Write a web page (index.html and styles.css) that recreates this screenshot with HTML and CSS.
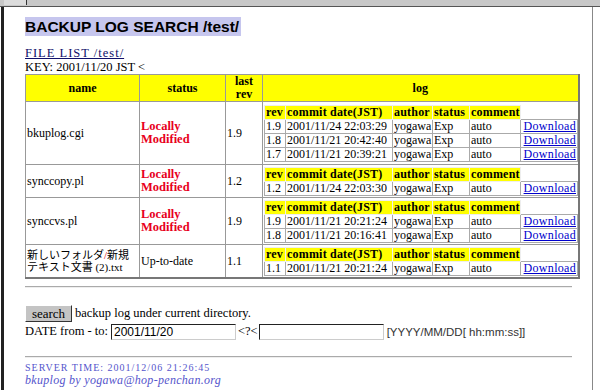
FILE: index.html
```html
<!DOCTYPE html>
<html lang="ja">

<head>
  <meta charset="utf-8">
  <title>BACKUP LOG SEARCH</title>
  <link rel="stylesheet" href="styles.css">
</head>

<body>
  <div class="titlebar"><span class="tab">Bkmrk</span></div>
  <div class="page">

    <h1 class="title"><span>BACKUP LOG SEARCH /test/</span></h1>

    <a href="#" class="filelist">FILE LIST /test/</a>
    <div class="key">KEY: 2001/11/20 JST &lt;</div>

    <table class="files">
      <colgroup>
        <col class="c-name">
        <col class="c-status">
        <col class="c-rev">
        <col class="c-log">
      </colgroup>
      <tr>
        <th>name</th>
        <th>status</th>
        <th>last<br>rev</th>
        <th>log</th>
      </tr>
      <tr class="tall">
        <td>bkuplog.cgi</td>
        <td class="mod">Locally<br>Modified</td>
        <td>1.9</td>
        <td class="logcell">
          <table class="log">
            <colgroup><col class="l-rev"><col class="l-date"><col class="l-author"><col class="l-status"><col class="l-comment"><col></colgroup>
            <tr><th>rev</th><th>commit date(JST)</th><th>author</th><th>status</th><th>comment</th><td class="blank"></td></tr>
            <tr><td>1.9</td><td>2001/11/24 22:03:29</td><td>yogawa</td><td>Exp</td><td>auto</td><td class="dl"><a href="#">Download</a></td></tr>
            <tr><td>1.8</td><td>2001/11/21 20:42:40</td><td>yogawa</td><td>Exp</td><td>auto</td><td class="dl"><a href="#">Download</a></td></tr>
            <tr><td>1.7</td><td>2001/11/21 20:39:21</td><td>yogawa</td><td>Exp</td><td>auto</td><td class="dl"><a href="#">Download</a></td></tr>
          </table>
        </td>
      </tr>
      <tr>
        <td>synccopy.pl</td>
        <td class="mod">Locally<br>Modified</td>
        <td>1.2</td>
        <td class="logcell">
          <table class="log">
            <colgroup><col class="l-rev"><col class="l-date"><col class="l-author"><col class="l-status"><col class="l-comment"><col></colgroup>
            <tr><th>rev</th><th>commit date(JST)</th><th>author</th><th>status</th><th>comment</th><td class="blank"></td></tr>
            <tr><td>1.2</td><td>2001/11/24 22:03:30</td><td>yogawa</td><td>Exp</td><td>auto</td><td class="dl"><a href="#">Download</a></td></tr>
          </table>
        </td>
      </tr>
      <tr>
        <td>synccvs.pl</td>
        <td class="mod">Locally<br>Modified</td>
        <td>1.9</td>
        <td class="logcell">
          <table class="log">
            <colgroup><col class="l-rev"><col class="l-date"><col class="l-author"><col class="l-status"><col class="l-comment"><col></colgroup>
            <tr><th>rev</th><th>commit date(JST)</th><th>author</th><th>status</th><th>comment</th><td class="blank"></td></tr>
            <tr><td>1.9</td><td>2001/11/21 20:21:24</td><td>yogawa</td><td>Exp</td><td>auto</td><td class="dl"><a href="#">Download</a></td></tr>
            <tr><td>1.8</td><td>2001/11/21 20:16:41</td><td>yogawa</td><td>Exp</td><td>auto</td><td class="dl"><a href="#">Download</a></td></tr>
          </table>
        </td>
      </tr>
      <tr>
        <td class="jp">新しいフォルダ<span class="slash">/</span>新規<br>テキスト文書 (2).txt</td>
        <td>Up-to-date</td>
        <td>1.1</td>
        <td class="logcell">
          <table class="log">
            <colgroup><col class="l-rev"><col class="l-date"><col class="l-author"><col class="l-status"><col class="l-comment"><col></colgroup>
            <tr><th>rev</th><th>commit date(JST)</th><th>author</th><th>status</th><th>comment</th><td class="blank"></td></tr>
            <tr><td>1.1</td><td>2001/11/21 20:21:24</td><td>yogawa</td><td>Exp</td><td>auto</td><td class="dl"><a href="#">Download</a></td></tr>
          </table>
        </td>
      </tr>
    </table>

    <hr class="rule">

    <form class="search">
      <div class="line">
        <button type="button" class="btn">search</button>
        <span>backup log under current directory.</span>
      </div>
      <div class="line">
        <span>DATE from - to:</span>
        <input type="text" class="date" value="2001/11/20">
        <span class="sep">&lt;?&lt;</span>
        <input type="text" class="date">
        <span class="fmt">[YYYY/MM/DD[ hh:mm:ss]]</span>
      </div>
    </form>

    <hr class="rule second">

    <div class="footer">
      <div class="time">SERVER TIME: 2001/12/06 21:26:45</div>
      <div class="sig">bkuplog by yogawa@hop-penchan.org</div>
    </div>

  </div>
</body>

</html>
```

FILE: styles.css
```css
body {
  margin: 0;
  background: #fff;
  color: #000;
  font-family: "Liberation Serif", "Noto Sans CJK JP", serif;
  font-size: 12px;
  overflow: hidden;
}

.titlebar {
  height: 6px;
  background: #c8c8c8;
  border-bottom: 1px solid #555;
}

.tab {
  display: block;
  width: 22px;
  height: 5px;
  margin-left: 4px;
  border-right: 1px solid #333;
  font-size: 0;
  background: #dcdcdc;
}

.page {
  width: 567px;
  height: 383px;
  border-left: 3px solid #222;
  border-right: 1px solid #888;
  margin-left: 1px;
  padding: 10px 0 0 21px;
  box-sizing: content-box;
}

.title {
  margin: 0 0 10px;
  font-family: "Liberation Sans", Arial, sans-serif;
  font-size: 15.5px;
  line-height: 19px;
  height: 19px;
}

.title span {
  display: inline-block;
  background: #c6c6ee;
  padding-right: 2px;
}

.filelist {
  display: inline-block;
  color: #10106a;
  font-size: 12.5px;
  letter-spacing: 1px;
  line-height: 13px;
}

.key {
  font-size: 12.5px;
  line-height: 13px;
}

.files {
  border-collapse: collapse;
  table-layout: fixed;
  width: 554px;
  border: 1px solid #777;
  border-right-width: 2px;
  border-bottom-width: 2px;
}

.c-name { width: 114px; }
.c-status { width: 86px; }
.c-rev { width: 37px; }
.c-log { width: 316px; }

.files > tbody > tr > th,
.files > tbody > tr > td {
  border: 1px solid #999;
  padding: 0 1px;
  line-height: 13px;
}

.files > tbody > tr > th {
  background: #ffff00;
  height: 24px;
  font-weight: bold;
}

.files > tbody > tr.tall > td {
  height: 59px;
}

.files td.mod {
  color: #e8001c;
  font-weight: bold;
  font-size: 12.5px;
}

.files td.jp {
  font-size: 11px;
  line-height: 12px;
  white-space: nowrap;
}

.files td.logcell {
  padding: 2px 1px 1px;
}

.slash {
  color: #d00;
}

.log {
  border-collapse: collapse;
  table-layout: fixed;
  width: 314px;
  border: 1px solid #999;
}

.l-rev { width: 21px; }
.l-date { width: 107px; }
.l-author { width: 40px; }
.l-status { width: 37px; }
.l-comment { width: 51px; }

.log th,
.log td {
  padding: 0 1px;
  line-height: 13px;
  white-space: nowrap;
  overflow: hidden;
  text-align: left;
}

.log td {
  border: 1px solid #aaa;
}

.log th {
  background: #ffff00;
  border: 1px solid #eee;
  font-weight: bold;
  letter-spacing: 0.2px;
}

.log td.blank {
  border: 1px solid #fff;
  border-bottom-color: #aaa;
}

.log td.dl {
  text-align: right;
}

.dl a {
  color: #0000cc;
  letter-spacing: 0.3px;
}

.rule {
  width: 547px;
  margin: 7px 0 0;
  border: 0;
  border-top: 1px solid #aaa;
  border-bottom: 1px solid #eee;
  height: 0;
}

.search {
  margin: 17px 0 0;
}

.line {
  display: flex;
  align-items: center;
  gap: 3px;
  height: 17px;
  font-size: 12.5px;
}

.line + .line {
  margin-top: 1px;
}

.btn {
  width: 47px;
  height: 17px;
  padding: 0;
  background: #c4c4c4;
  border: 1px solid;
  border-color: #fff #333 #333 #fff;
  font-family: "Liberation Serif", serif;
  font-size: 13px;
}

.date {
  width: 125px;
  height: 16px;
  box-sizing: border-box;
  padding: 0 2px;
  border: 1px solid;
  border-color: #222 #ccc #ccc #222;
  font-family: "Liberation Sans", sans-serif;
  font-size: 12px;
  margin: 0;
}

.sep {
  margin: 0 -2px 0 -1px;
}

.fmt {
  font-family: "Liberation Sans", sans-serif;
  font-size: 11.5px;
  color: #333;
}

.second {
  margin-top: 16px;
}

.footer {
  margin-top: 4px;
  color: #5555cc;
}

.time {
  font-size: 10px;
  letter-spacing: 1px;
  line-height: 12px;
}

.sig {
  font-style: italic;
  font-size: 12px;
  letter-spacing: 0.3px;
  line-height: 13px;
}
```
